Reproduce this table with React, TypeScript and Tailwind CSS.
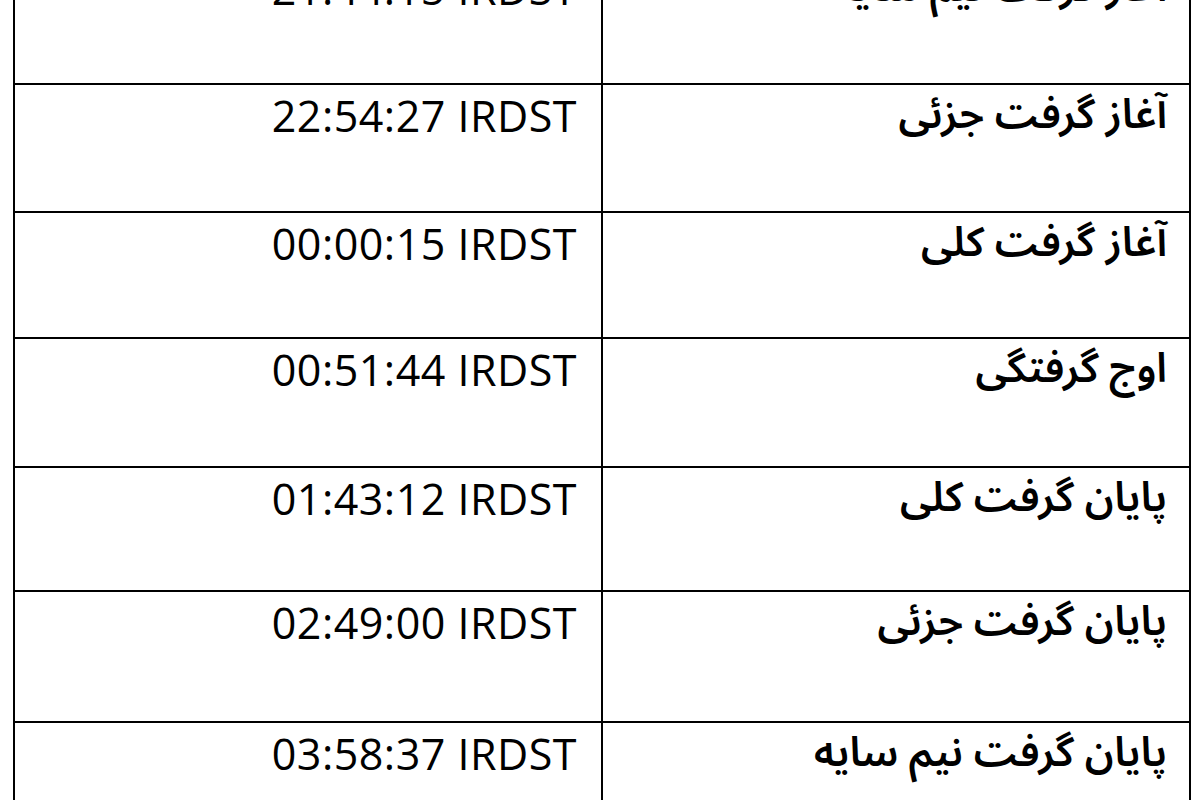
const rows = [
  { time: '21:44:15 IRDST', label: 'آغاز گرفت نیم سایه', h: 'h-[127px]' },
  { time: '22:54:27 IRDST', label: 'آغاز گرفت جزئی', h: 'h-[128px]' },
  { time: '00:00:15 IRDST', label: 'آغاز گرفت کلی', h: 'h-[126px]' },
  { time: '00:51:44 IRDST', label: 'اوج گرفتگی', h: 'h-[129px]' },
  { time: '01:43:12 IRDST', label: 'پایان گرفت کلی', h: 'h-[124px]' },
  { time: '02:49:00 IRDST', label: 'پایان گرفت جزئی', h: 'h-[131px]' },
  { time: '03:58:37 IRDST', label: 'پایان گرفت نیم سایه', h: 'h-[127px]' },
]

export default function App() {
  return (
    <div className="w-[1200px] h-[800px] overflow-hidden bg-white">
      <table className="ml-[13px] mt-[-44px] w-[1178px] border-collapse table-fixed">
        <tbody>
          {rows.map((r) => (
            <tr key={r.time} className={r.h}>
              <td className="w-1/2 border-2 border-black align-top text-right pr-[24px] pt-[2px] text-[43px] leading-[58px] tracking-[0.5px] text-black font-['Open_Sans',sans-serif]">
                {r.time}
              </td>
              <td
                dir="rtl"
                className="w-1/2 border-2 border-black align-top text-right pr-[22px] pt-[0px] text-[41px] leading-[60px] font-semibold text-black font-['Noto_Sans_Arabic','DejaVu_Sans',sans-serif]"
              >
                {r.label}
              </td>
            </tr>
          ))}
        </tbody>
      </table>
    </div>
  )
}
